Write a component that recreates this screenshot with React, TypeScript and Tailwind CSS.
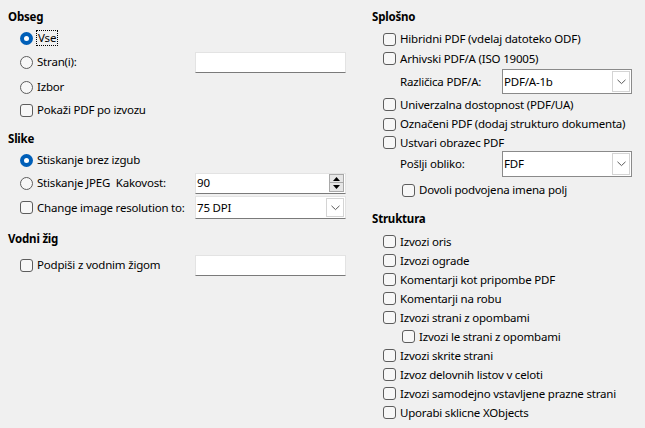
import React from 'react'

type RowProps = {
  className: string
  children?: React.ReactNode
}

function Row({ className, children }: RowProps) {
  return <div className={'flex items-center whitespace-pre ' + className}>{children}</div>
}

function Radio({ checked, label, focus }: { checked?: boolean; label: string; focus?: boolean }) {
  return (
    <div className="flex items-center">
      {checked ? (
        <span className="flex h-[13px] w-[13px] items-center justify-center rounded-full bg-[#005fb8]">
          <span className="h-[5px] w-[5px] rounded-full bg-white" />
        </span>
      ) : (
        <span className="h-[13px] w-[13px] rounded-full border border-[#5d5d5d] bg-[#f7f7f7]" />
      )}
      <span
        className={
          focus
            ? 'ml-[3px] border border-dotted border-black px-[1px] leading-[14px]'
            : 'ml-[4px] leading-[14px]'
        }
      >
        {label}
      </span>
    </div>
  )
}

function Check({ label }: { label: string }) {
  return (
    <div className="flex items-center">
      <span className="h-[13px] w-[13px] shrink-0 rounded-[3px] border border-[#5d5d5d] bg-[#f7f7f7]" />
      <span className="ml-[4px] leading-[14px]">{label}</span>
    </div>
  )
}

function Chevron() {
  return (
    <svg width="9" height="6" viewBox="0 0 9 6">
      <path d="M0.5 0.8 L4.5 4.6 L8.5 0.8" fill="none" stroke="#5a5a5a" strokeWidth="1" />
    </svg>
  )
}

function TextBox({ value, className }: { value?: string; className: string }) {
  return (
    <div
      className={
        'flex items-center border border-[#e3e3e3] border-b-[#7a7a7a] bg-white pl-[1px] ' + className
      }
    >
      {value}
    </div>
  )
}

function Spin() {
  return (
    <div className="flex h-[21px] w-[151px] items-center border border-[#e3e3e3] border-b-[#7a7a7a] bg-white">
      <span className="flex-1 pl-[1px]">90</span>
      <div className="mr-[1px] flex flex-col">
        <span className="flex h-[9px] w-[15px] items-center justify-center border border-[#a9a9a9] bg-[#e6e6e6]">
          <svg width="7" height="4" viewBox="0 0 7 4">
            <path d="M0 4 L3.5 0 L7 4 Z" fill="#000" />
          </svg>
        </span>
        <span className="flex h-[9px] w-[15px] items-center justify-center border border-t-0 border-[#a9a9a9] bg-[#e6e6e6]">
          <svg width="7" height="4" viewBox="0 0 7 4">
            <path d="M0 0 L7 0 L3.5 4 Z" fill="#000" />
          </svg>
        </span>
      </div>
    </div>
  )
}

function Select({ value, framed, className }: { value: string; framed?: boolean; className: string }) {
  return (
    <div
      className={
        (framed
          ? 'border border-[#8a8a8a] '
          : 'border border-[#e3e3e3] border-b-[#7a7a7a] ') +
        'flex items-stretch bg-white ' +
        className
      }
    >
      <span className="flex flex-1 items-center pl-[1px]">{value}</span>
      <span className="m-[1px] flex w-[18px] items-center justify-center border border-[#d4d4d4] bg-white">
        <Chevron />
      </span>
    </div>
  )
}

export default function App() {
  const struktura = [
    'Izvozi oris',
    'Izvozi ograde',
    'Komentarji kot pripombe PDF',
    'Komentarji na robu',
    'Izvozi strani z opombami',
  ]
  const struktura2 = [
    'Izvozi skrite strani',
    'Izvoz delovnih listov v celoti',
    'Izvozi samodejno vstavljene prazne strani',
    'Uporabi sklicne XObjects',
  ]
  return (
    <div
      className="flex h-[428px] w-[645px] bg-[#f0f0f0] text-[11.5px] tracking-[-0.2px] text-black"
      style={{ fontFamily: '"Noto Sans", "Open Sans", sans-serif' }}
    >
      {/* levi stolpec */}
      <div className="w-[346px] pl-2 pt-[7px]">
        <Row className="h-[20px] font-bold">Obseg</Row>
        <Row className="h-[22px] pl-3">
          <Radio checked focus label="Vse" />
        </Row>
        <Row className="h-[26px] pl-3">
          <div className="w-[175px]">
            <Radio label="Stran(i):" />
          </div>
          <TextBox className="h-[21px] w-[151px]" />
        </Row>
        <Row className="h-[24px] pl-3">
          <Radio label="Izbor" />
        </Row>
        <Row className="h-[22px] pl-3">
          <Check label="Pokaži PDF po izvozu" />
        </Row>

        <Row className="mt-[8px] h-[20px] font-bold">Slike</Row>
        <Row className="h-[22px] pl-3">
          <Radio checked label="Stiskanje brez izgub" />
        </Row>
        <Row className="h-[24px] pl-3">
          <div className="w-[175px]">
            <Radio label="Stiskanje JPEG  Kakovost:" />
          </div>
          <Spin />
        </Row>
        <Row className="h-[25px] pl-3">
          <div className="w-[175px]">
            <Check label="Change image resolution to:" />
          </div>
          <Select value="75 DPI" className="h-[23px] w-[151px]" />
        </Row>

        <Row className="mt-[9px] h-[20px] font-bold">Vodni žig</Row>
        <Row className="h-[32px] pl-3">
          <div className="w-[175px]">
            <Check label="Podpiši z vodnim žigom" />
          </div>
          <TextBox className="h-[21px] w-[151px]" />
        </Row>
      </div>

      {/* desni stolpec */}
      <div className="ml-[26px] w-[260px] pt-[7px]">
        <Row className="h-[20px] font-bold">Splošno</Row>
        <Row className="mt-[2px] h-[20px] pl-[11px]">
          <Check label="Hibridni PDF (vdelaj datoteko ODF)" />
        </Row>
        <Row className="h-[19px] pl-[11px]">
          <Check label="Arhivski PDF/A (ISO 19005)" />
        </Row>
        <Row className="h-[27px] pl-[28px]">
          <span className="w-[102px]">Različica PDF/A:</span>
          <Select framed value="PDF/A-1b" className="h-[25px] w-[130px]" />
        </Row>
        <Row className="h-[19px] pl-[11px]">
          <Check label="Univerzalna dostopnost (PDF/UA)" />
        </Row>
        <Row className="h-[20px] pl-[11px]">
          <Check label="Označeni PDF (dodaj strukturo dokumenta)" />
        </Row>
        <Row className="h-[17px] pl-[11px]">
          <Check label="Ustvari obrazec PDF" />
        </Row>
        <Row className="h-[26px] pl-[28px]">
          <span className="w-[102px]">Pošlji obliko:</span>
          <Select framed value="FDF" className="h-[26px] w-[130px]" />
        </Row>
        <Row className="h-[26px] pl-[30px]">
          <Check label="Dovoli podvojena imena polj" />
        </Row>

        <Row className="mt-[6px] h-[20px] font-bold">Struktura</Row>
        <div className="mt-[3px]">
          {struktura.map((s) => (
            <Row key={s} className="h-[19px] pl-[11px]">
              <Check label={s} />
            </Row>
          ))}
          <Row className="h-[19px] pl-[30px]">
            <Check label="Izvozi le strani z opombami" />
          </Row>
          {struktura2.map((s) => (
            <Row key={s} className="h-[19px] pl-[11px]">
              <Check label={s} />
            </Row>
          ))}
        </div>
      </div>
    </div>
  )
}
